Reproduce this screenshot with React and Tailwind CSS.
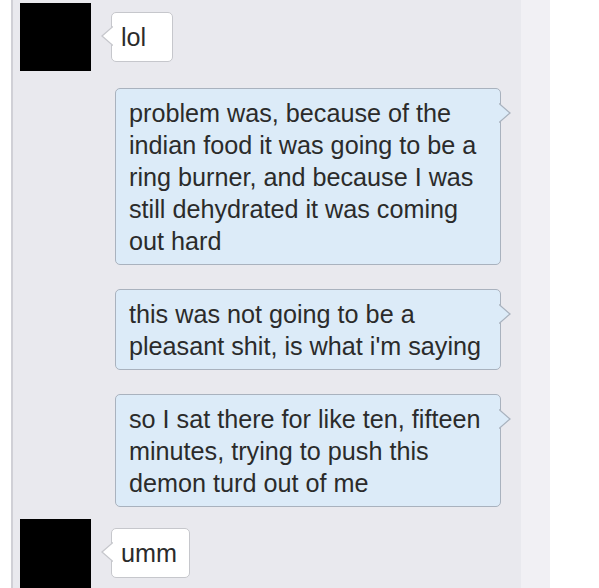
import React from "react";

const outgoing = [
  [
    "problem was, because of the",
    "indian food it was going to be a",
    "ring burner, and because I was",
    "still dehydrated it was coming",
    "out hard",
  ],
  ["this was not going to be a", "pleasant shit, is what i'm saying"],
  [
    "so I sat there for like ten, fifteen",
    "minutes, trying to push this",
    "demon turd out of me",
  ],
];

// little tail on the side of a bubble
function Tail({ side, fill, stroke }) {
  if (side === "left") {
    return (
      <svg
        className="absolute left-[-11px] top-[13px] h-[20px] w-[12px]"
        viewBox="0 0 12 20"
      >
        <polygon points="12,0 1,10 12,20" fill={fill} />
        <polyline points="12,0.5 1,10 12,19.5" fill="none" stroke={stroke} strokeWidth="1.3" />
      </svg>
    );
  }
  return (
    <svg
      className="absolute right-[-11px] top-[14px] h-[20px] w-[12px]"
      viewBox="0 0 12 20"
    >
      <polygon points="0,0 11,10 0,20" fill={fill} />
      <polyline points="0,0.5 11,10 0,19.5" fill="none" stroke={stroke} strokeWidth="1.3" />
    </svg>
  );
}

function Incoming({ text, width }) {
  return (
    <div
      className={`relative mt-[9px] ml-[20px] h-[50px] ${width} rounded-[5px] border border-[#c6c7cc] bg-white pl-[9px] pt-[8px] text-[25.2px] leading-[32px] text-[#2b2b2b]`}
    >
      <Tail side="left" fill="#ffffff" stroke="#c6c7cc" />
      {text}
    </div>
  );
}

function Outgoing({ lines, first }) {
  return (
    <div
      className={`relative w-[386px] rounded-[5px] border border-[#a9b2be] bg-[#dcebf8] pb-[7px] pl-[13px] pt-[8px] text-[25.2px] leading-[32px] text-[#2b2b2b] ${
        first ? "mt-[17px]" : "mt-[24px]"
      }`}
    >
      <Tail side="right" fill="#dcebf8" stroke="#a9b2be" />
      {lines.map((line, i) => (
        <span key={i} className="block whitespace-nowrap">
          {line}
        </span>
      ))}
    </div>
  );
}

export default function App() {
  return (
    <div className="flex h-[588px] w-[599px] overflow-hidden bg-white font-['Liberation_Sans',Arial,sans-serif]">
      <div className="w-[11px] shrink-0 bg-white" />
      <div className="w-[2px] shrink-0 bg-[#d0d0d6]" />

      <div className="flex w-[508px] shrink-0 flex-col bg-[#e9e9ee]">
        <div className="flex items-start pl-[7px] pt-[3px]">
          <div className="h-[68px] w-[71px] bg-black" />
          <Incoming text="lol" width="w-[62px]" />
        </div>

        <div className="flex flex-col items-start pl-[102px]">
          {outgoing.map((lines, i) => (
            <Outgoing key={i} lines={lines} first={i === 0} />
          ))}
        </div>

        <div className="mt-[12px] flex items-start pl-[7px]">
          <div className="h-[80px] w-[71px] bg-black" />
          <Incoming text="umm" width="w-[79px]" />
        </div>
      </div>

      <div className="w-[29px] shrink-0 bg-[#f1f0f4]" />
      <div className="flex-1 bg-white" />
    </div>
  );
}
